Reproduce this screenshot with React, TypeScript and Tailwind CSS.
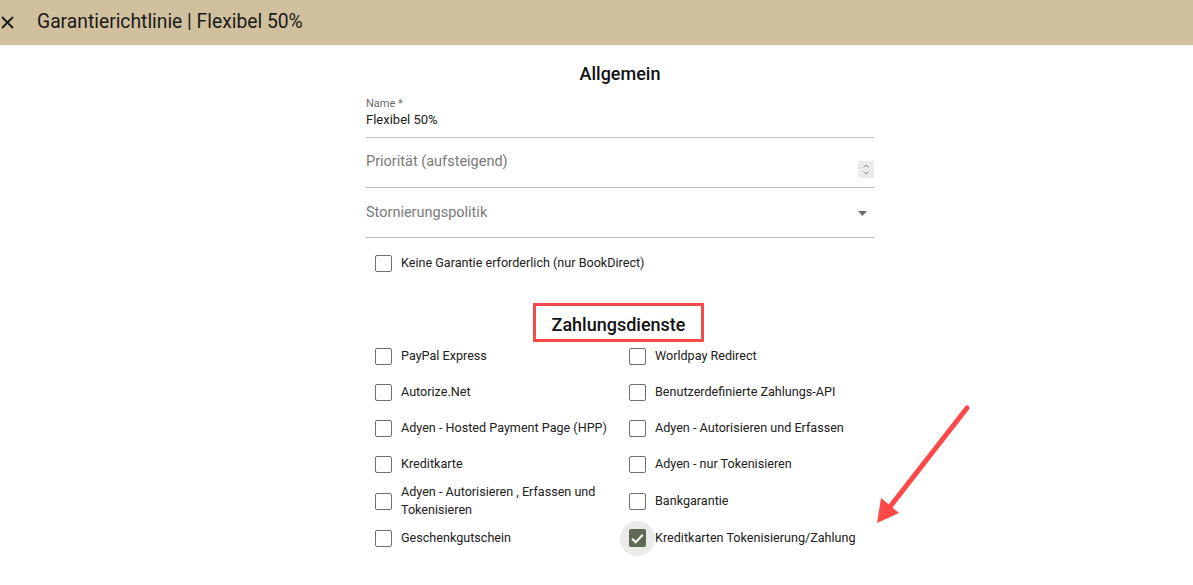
import React from "react";

type Option = { label: string; checked?: boolean; tall?: boolean };

const rows: [Option, Option][] = [
  [{ label: "PayPal Express" }, { label: "Worldpay Redirect" }],
  [{ label: "Autorize.Net" }, { label: "Benutzerdefinierte Zahlungs-API" }],
  [{ label: "Adyen - Hosted Payment Page (HPP)" }, { label: "Adyen - Autorisieren und Erfassen" }],
  [{ label: "Kreditkarte" }, { label: "Adyen - nur Tokenisieren" }],
  [{ label: "Adyen - Autorisieren , Erfassen und Tokenisieren", tall: true }, { label: "Bankgarantie" }],
  [{ label: "Geschenkgutschein" }, { label: "Kreditkarten Tokenisierung/Zahlung", checked: true }],
];

const Box: React.FC<{ checked?: boolean }> = ({ checked }) =>
  checked ? (
    <span className="relative flex w-[17px] h-[17px] shrink-0 items-center justify-center">
      <span className="absolute -inset-[9px] rounded-full bg-[#ebebea]" />
      <span className="relative flex w-[18px] h-[18px] items-center justify-center rounded-[2px] bg-[#5e6a52]">
        <svg width="15" height="15" viewBox="0 0 24 24" fill="none">
          <path d="M3.5 12.5l5.5 5.5L20.5 6" stroke="white" strokeWidth="3.4" />
        </svg>
      </span>
    </span>
  ) : (
    <span className="w-[17px] h-[17px] shrink-0 rounded-[2px] border border-[#6f6f6f] bg-white" />
  );

const Check: React.FC<{ opt: Option }> = ({ opt }) => (
  <div className={`flex items-center gap-[9px] pl-[9px] ${opt.tall ? "min-h-[36px] py-[1px]" : "min-h-[36px]"}`}>
    <Box checked={opt.checked} />
    <span className="text-[12.6px] leading-[18px] text-[#212121]">{opt.label}</span>
  </div>
);

export default function App() {
  return (
    <div className="relative min-h-[585px] bg-white" style={{ fontFamily: "Roboto, 'Liberation Sans', sans-serif" }}>
      {/* Top bar */}
      <header className="h-[45px] bg-[#d1c09d] flex items-center">
        <svg className="ml-[1px] mr-[23px]" width="13" height="13" viewBox="0 0 13 13">
          <path d="M1 1l11 11M12 1L1 12" stroke="#1a1a1a" strokeWidth="1.8" />
        </svg>
        <h1 className="text-[19.3px] text-[#1a1a1a]">Garantierichtlinie | Flexibel 50%</h1>
      </header>

      <main className="ml-[366px] w-[508px] flex flex-col">
        <h2 className="mt-[17px] text-center text-[18px] leading-[24px] font-medium text-[#111]">Allgemein</h2>

        {/* Name */}
        <div className="mt-[11px] border-b border-[#bdbdbd] pb-[9px]">
          <div className="text-[11px] leading-[14px] text-[#6b6b6b]">Name *</div>
          <div className="mt-[1px] text-[13px] leading-[16px] text-[#212121]">Flexibel 50%</div>
        </div>

        {/* Priorität */}
        <div className="flex items-start justify-between border-b border-[#bdbdbd] pt-[14px] pb-[15px]">
          <span className="text-[14.5px] leading-[20px] text-[#7a7a7a]">Priorität (aufsteigend)</span>
          <span className="mt-[9px] -mb-[6px] flex w-[16px] h-[17px] items-center justify-center bg-[#ebebeb]">
            <svg width="8" height="11" viewBox="0 0 8 11" fill="none">
              <path d="M1.5 3.5L4 1l2.5 2.5M1.5 7.5L4 10l2.5-2.5" stroke="#8a8a8a" strokeWidth="1" />
            </svg>
          </span>
        </div>

        {/* Stornierungspolitik */}
        <div className="flex items-center justify-between border-b border-[#bdbdbd] pt-[15px] pb-[14px]">
          <span className="text-[14.5px] leading-[20px] text-[#7a7a7a]">Stornierungspolitik</span>
          <svg className="mr-[7px]" width="9" height="5" viewBox="0 0 9 5">
            <path d="M0 0h9L4.5 5z" fill="#6b6b6b" />
          </svg>
        </div>

        <div className="mt-[16px] flex items-center gap-[9px] pl-[9px] h-[18px]">
          <Box />
          <span className="text-[12.6px] leading-[18px] text-[#212121]">Keine Garantie erforderlich (nur BookDirect)</span>
        </div>

        <div className="mt-[31px] mb-[-4px] ml-[167px] w-[171px] h-[39px] border-[3px] border-[#f44a4a] flex items-center justify-center">
          <span className="text-[18px] font-medium text-[#111] mt-[4px]">Zahlungsdienste</span>
        </div>

        <div className="grid grid-cols-2">
          {rows.map(([a, b], i) => (
            <React.Fragment key={i}>
              <Check opt={a} />
              <Check opt={b} />
            </React.Fragment>
          ))}
        </div>
      </main>

      {/* Annotation arrow */}
      <svg className="absolute left-0 top-0 pointer-events-none" width="1193" height="585">
        <line x1="967" y1="408" x2="889" y2="508" stroke="#ff4848" strokeWidth="5" strokeLinecap="round" />
        <polygon points="877,523 881,498 899,513" fill="#ff4848" />
      </svg>
    </div>
  );
}
